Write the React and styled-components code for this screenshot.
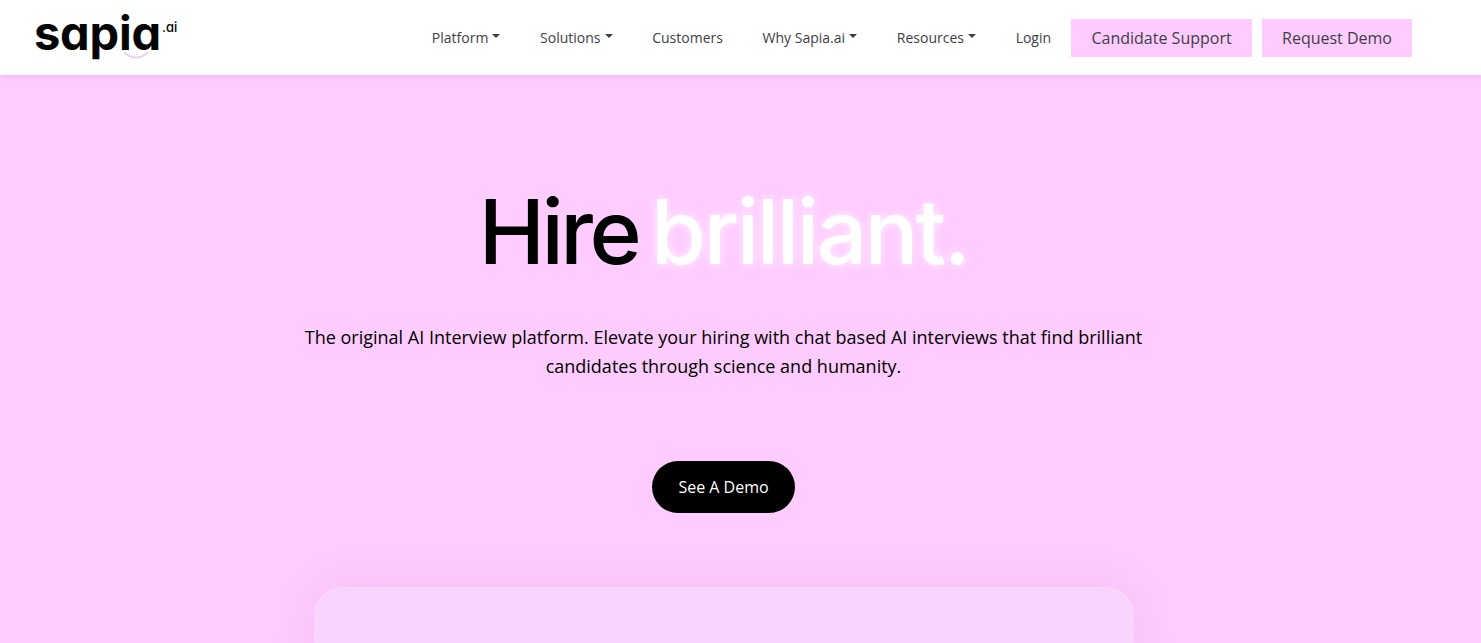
import React from "react";
import styled, { createGlobalStyle } from "styled-components";

const Global = createGlobalStyle`
  html, body { margin: 0; padding: 0; height: 643px; overflow: hidden; background: #ffccff; }
  body { font-family: "Open Sans", "Liberation Sans", sans-serif; }
`;
const Page = styled.div`
  width: 1481px;
  height: 643px;
  overflow: hidden;
  display: flex;
  flex-direction: column;
  background: #ffccff;
`;
const Header = styled.header`
  height: 75px;
  flex: none;
  background: #fff;
  box-shadow: 0 1px 5px rgba(120, 60, 120, 0.16);
  display: flex;
  align-items: center;
  justify-content: space-between;
  padding: 0 69px 0 35px;
  position: relative;
  z-index: 2;
`;
const Logo = styled.a`
  position: relative;
  display: block;
  width: 145px;
  height: 62px;
  color: #050505;
`;
const LogoWord = styled.span`
  position: absolute;
  left: -1px;
  top: -5px;
  font-family: "Inter", sans-serif;
  font-feature-settings: "cv11";
  font-weight: 700;
  font-size: 47px;
  line-height: 62px;
  letter-spacing: -0.2px;
`;
const LogoSuffix = styled.span`
  position: absolute;
  left: 127px;
  top: 12px;
  font-family: "Inter", sans-serif;
  font-feature-settings: "cv11";
  font-weight: 500;
  font-size: 13px;
  line-height: 16px;
`;
const Smile = styled.svg`
  position: absolute;
  left: 86px;
  top: 43px;
`;
const Nav = styled.nav`
  display: flex;
  align-items: center;
  gap: 10px;
`;
const NavLinks = styled.div`
  display: flex;
  align-items: center;
  gap: 39.7px;
  margin-right: 10px;
`;
const NavItem = styled.a`
  display: inline-flex;
  align-items: center;
  font-size: 14px;
  line-height: 24px;
  color: #3e3e48;
  white-space: nowrap;
  &[data-caret="true"]::after {
    content: "";
    margin-left: 4px;
    margin-top: -3px;
    border-top: 4px solid #3e3e48;
    border-left: 4px solid transparent;
    border-right: 4px solid transparent;
  }
`;
const NavButton = styled.a`
  display: block;
  height: 38px;
  padding: 0 ${(p) => (p.$wide ? "20.4px" : "20px")};
  background: #fcf;
  color: #3e3e48;
  font-size: 16px;
  line-height: 38px;
  white-space: nowrap;
`;
const Hero = styled.main`
  flex: 1;
  display: flex;
  flex-direction: column;
  align-items: center;
  padding: 103px 34px 0 0;
  min-height: 0;
`;
const Title = styled.h1`
  margin: 0;
  display: flex;
  gap: 13px;
  font-family: "Inter", sans-serif;
  font-weight: 500;
  font-size: 89px;
  line-height: 107px;
  letter-spacing: -3.6px;
  color: #000;
  white-space: nowrap;
`;
const Glow = styled.span`
  color: #fff;
  letter-spacing: -2.45px;
  text-shadow: 0 0 10px rgba(255, 255, 255, 0.75);
`;
const Lead = styled.p`
  margin: 38px 0 0;
  width: 860px;
  text-align: center;
  font-size: 18px;
  line-height: 29px;
  color: #000;
`;
const Cta = styled.a`
  display: block;
  margin-top: 80px;
  height: 52px;
  padding: 0 26px;
  border-radius: 26px;
  background: #000;
  color: #fff;
  font-size: 16px;
  font-weight: 500;
  line-height: 52px;
`;
const Card = styled.div`
  margin-top: 74px;
  width: 820px;
  height: 200px;
  flex: none;
  border-radius: 28px;
  background: #f9d4fc;
  box-shadow: 0 -4px 40px rgba(170, 90, 170, 0.1);
`;

const links = [
  ["Platform", true],
  ["Solutions", true],
  ["Customers", false],
  ["Why Sapia.ai", true],
  ["Resources", true],
  ["Login", false],
];

export default function App() {
  return (
    <Page>
      <Global />
      <Header>
        <Logo>
          <LogoWord>sapia</LogoWord>
          <LogoSuffix>.ai</LogoSuffix>
          <Smile width="30" height="12" viewBox="0 0 30 12">
            <path d="M4 3 C10 9 20 9 26 3" fill="none" stroke="#f3cdec" strokeWidth="2" strokeLinecap="round" />
          </Smile>
        </Logo>
        <Nav>
          <NavLinks>
            {links.map(([label, caret]) => (
              <NavItem key={label} data-caret={caret}>{label}</NavItem>
            ))}
          </NavLinks>
          <NavButton $wide>Candidate Support</NavButton>
          <NavButton>Request Demo</NavButton>
        </Nav>
      </Header>
      <Hero>
        <Title><span>Hire</span><Glow>brilliant.</Glow></Title>
        <Lead>
          The original AI Interview platform. Elevate your hiring with chat based AI interviews that find brilliant candidates through science and humanity.
        </Lead>
        <Cta>See A Demo</Cta>
        <Card />
      </Hero>
    </Page>
  );
}
